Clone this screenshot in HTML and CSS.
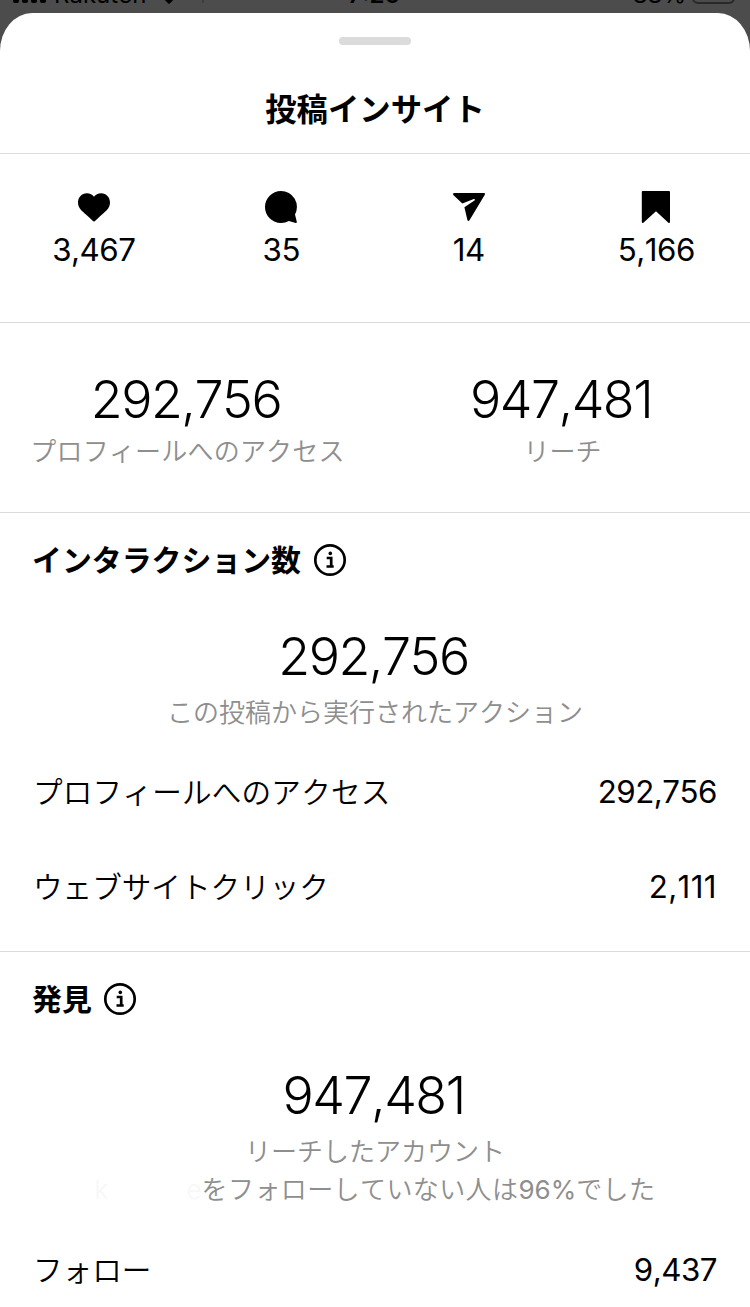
FILE: index.html
```html
<!DOCTYPE html>
<html lang="ja">
<head>
    <meta charset="UTF-8">
    <meta name="viewport" content="width=device-width, initial-scale=1.0">
    <title>投稿インサイト</title>
    <link rel="stylesheet" href="styles.css">
</head>
<body>
    <!-- Dimmed status bar behind the sheet -->
    <div class="status-bar">
        <div class="status-left">
            <span class="signal"><i></i><i></i><i></i><i></i></span>
            <span class="carrier">Rakuten</span>
            <svg class="wifi" width="22" height="16" viewBox="0 0 22 16"><path d="M0 5 Q11 -4 22 5 L12 15.3 Q11 16.3 10 15.3 Z"/></svg>
            <span class="tick"></span>
        </div>
        <span class="time">7:26</span>
        <div class="status-right">
            <span class="percent">88%</span>
            <span class="battery"></span>
        </div>
    </div>

    <main class="sheet">
        <header class="sheet-header">
            <div class="handle"></div>
            <h1>投稿インサイト</h1>
        </header>

        <section class="counts">
            <div class="count">
                <svg width="34" height="34" viewBox="0 0 34 34"><path d="M17 31.5 C16 31.5 14.8 29.6 12 27.2 C6 22 1 18.6 1 12.5 C1 7.2 4.9 3.2 9.8 3.2 C13 3.2 15.4 4.6 17 6.8 C18.6 4.6 21 3.2 24.2 3.2 C29.1 3.2 33 7.2 33 12.5 C33 18.6 28 22 22 27.2 C19.2 29.6 18 31.5 17 31.5 Z"/></svg>
                <span>3,467</span>
            </div>
            <div class="count">
                <svg width="34" height="34" viewBox="0 0 34 34"><path d="M17 1 A16 16 0 1 0 17 33 C20 33 22.5 32.3 24.8 31 L31.8 32.9 Q33 33 32.8 31.7 L31 24.6 A16 16 0 0 0 17 1 Z"/></svg>
                <span>35</span>
            </div>
            <div class="count">
                <svg width="34" height="34" viewBox="0 0 34 34"><path d="M2 3 H32 Q33.7 3.2 32.8 4.8 L17.5 30.3 Q16.2 32 15.4 30 L12.4 17.3 L22.8 10.3 Q23.3 8.8 21.8 9 L10.3 13.6 L1.3 5 Q.3 3.4 2 3 Z"/></svg>
                <span>14</span>
            </div>
            <div class="count">
                <svg width="34" height="34" viewBox="0 0 34 34"><path d="M3.8 1 H30 Q31 1 31 2 V32 Q30.7 33.3 29.4 32.7 L17 21.2 L4.4 32.7 Q3.1 33.3 2.8 32 V2 Q2.8 1 3.8 1 Z"/></svg>
                <span>5,166</span>
            </div>
        </section>

        <section class="summary">
            <div class="stat">
                <div class="big">292,756</div>
                <div class="caption access">プロフィールへのアクセス</div>
            </div>
            <div class="stat">
                <div class="big">947,481</div>
                <div class="caption">リーチ</div>
            </div>
        </section>

        <section class="details interactions">
            <h2>インタラクション数
                <svg class="info" width="34" height="34" viewBox="0 0 34 34"><circle cx="17" cy="17" r="14.7"/><path d="M13.7 15 H18.2 V23.5 M13.5 23.5 H20.7"/><circle class="dot" cx="17.3" cy="10.4" r="1.8"/></svg>
            </h2>
            <div class="stat">
                <div class="big">292,756</div>
                <div class="caption">この投稿から実行されたアクション</div>
            </div>
            <div class="row"><span class="label access">プロフィールへのアクセス</span><span class="value">292,756</span></div>
            <div class="row"><span class="label">ウェブサイトクリック</span><span class="value ones">2,111</span></div>
        </section>

        <section class="details discovery">
            <h2>発見
                <svg class="info" width="34" height="34" viewBox="0 0 34 34"><circle cx="17" cy="17" r="14.7"/><path d="M13.7 15 H18.2 V23.5 M13.5 23.5 H20.7"/><circle class="dot" cx="17.3" cy="10.4" r="1.8"/></svg>
            </h2>
            <div class="stat">
                <div class="big">947,481</div>
                <div class="caption">リーチしたアカウント</div>
                <div class="caption followers"><span class="account"><span>k</span><span>e</span></span><span class="sentence">をフォローしていない人は<span class="rate">96%</span>でした</span></div>
            </div>
            <div class="row"><span class="label">フォロー</span><span class="value">9,437</span></div>
        </section>
    </main>
</body>
</html>
```

FILE: styles.css
```css
/* Basic Reset */
* {
    box-sizing: border-box;
    margin: 0;
    padding: 0;
}

body {
    width: 750px;
    height: 1307px;
    overflow: hidden;
    background: #4c4c4c;
    color: #000;
    font-family: Inter, "Noto Sans CJK JP", sans-serif;
    font-kerning: none;
}

/* Status bar, cut off by the top of the screen */
.status-bar {
    height: 13px;
    padding: 0 15px 0 13px;
    display: grid;
    grid-template-columns: 1fr auto 1fr;
    align-content: end;
    overflow: hidden;
    font-size: 24px;
    line-height: 30px;
}

.status-left,
.status-right {
    display: flex;
    align-items: flex-end;
    height: 30px;
}

.status-right {
    justify-content: flex-end;
}

.signal {
    display: flex;
    gap: 3px;
    margin-bottom: 10px;
}

.signal i {
    width: 6px;
    height: 12px;
    border-radius: 2px;
    background: #000;
}

.carrier {
    margin: 0 12px 3px 8px;
}

.wifi {
    margin-bottom: 9px;
}

.tick {
    width: 2px;
    height: 12px;
    margin: 0 0 10px 22px;
    background: #3d3d3d;
}

.time {
    margin: -2px 0 5px;
    font-weight: 600;
    line-height: 27px;
}

.percent {
    margin: 0 6px 3px 0;
}

.battery {
    width: 43px;
    height: 22px;
    border: 2px solid #292929;
    border-radius: 6px;
    margin-bottom: 9px;
}

/* Sheet */
.sheet {
    height: 1294px;
    background: #fff;
    border-radius: 32px 32px 0 0 / 38px 38px 0 0;
    overflow: hidden;
}

.sheet-header {
    height: 141px;
    padding-top: 24px;
    border-bottom: 1px solid #dbdbdb;
    text-align: center;
}

.handle {
    width: 72px;
    height: 8px;
    margin: 0 auto 42px;
    border-radius: 4px;
    background: #dbdbdb;
}

h1 {
    font-size: 31.4px;
    font-weight: 700;
    line-height: 46px;
}

/* Likes, comments, shares, saves */
.counts {
    height: 169px;
    padding-top: 36px;
    display: grid;
    grid-template-columns: repeat(4, 1fr);
    border-bottom: 1px solid #dbdbdb;
}

.count {
    display: flex;
    flex-direction: column;
    align-items: center;
    font-size: 31.3px;
    line-height: 40px;
    letter-spacing: -0.5px;
}

.count span {
    margin-top: 6px;
}

.summary {
    height: 190px;
    padding-top: 44px;
    display: grid;
    grid-template-columns: 1fr 1fr;
    border-bottom: 1px solid #dbdbdb;
}

.stat {
    text-align: center;
}

.big {
    padding-right: 3px;
    font-size: 52px;
    font-weight: 300;
    line-height: 66px;
    letter-spacing: -1.5px;
}

.caption {
    color: #8e8e8e;
    font-size: 26px;
    font-weight: 350;
    line-height: 38px;
    white-space: nowrap;
}

.access {
    letter-spacing: 0.2px;
}

/* Titled sections */
.details {
    padding: 0 33px;
}

.interactions {
    height: 439px;
    border-bottom: 1px solid #dbdbdb;
}

h2 {
    display: flex;
    align-items: center;
    gap: 12px;
    height: 94px;
    margin-left: -1px;
    font-size: 29.9px;
    font-weight: 700;
    line-height: 44px;
}

.discovery h2 {
    gap: 11px;
}

.info {
    fill: none;
    stroke: #000;
    stroke-width: 2.7;
}

.info .dot {
    fill: #000;
    stroke: none;
}

.details .stat {
    height: 137px;
    padding-top: 17px;
}

.details .big {
    margin-bottom: 4px;
}

.row {
    display: flex;
    justify-content: space-between;
    align-items: center;
    height: 95px;
}

.label {
    padding-bottom: 2px;
    font-size: 29.6px;
    font-weight: 350;
}

.value {
    font-size: 31.3px;
    letter-spacing: -0.5px;
}

.ones {
    letter-spacing: 0.4px;
}

.discovery .stat {
    height: 176px;
}

.followers {
    display: flex;
    justify-content: center;
}

.sentence {
    letter-spacing: 0.4px;
}

.rate {
    font-weight: 400;
    letter-spacing: 0;
}

/* Account name is faded out */
.account {
    display: flex;
    justify-content: space-between;
    width: 107px;
    color: #f7f7f7;
}
```
